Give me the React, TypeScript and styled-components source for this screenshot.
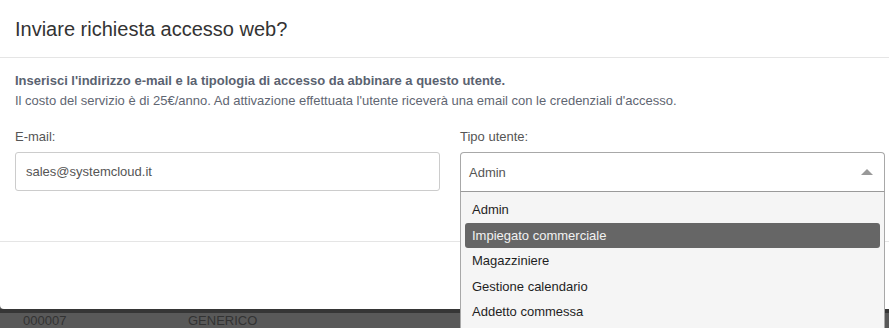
import type { FC } from 'react';
import styled, { createGlobalStyle } from 'styled-components';

const GlobalStyle = createGlobalStyle`
  html, body {
    margin: 0;
    padding: 0;
    background: #595959;
    overflow: hidden;
  }
  body {
    font-family: 'Liberation Sans', Arial, sans-serif;
    font-size: 13px;
    color: #333;
  }
`;

const Page = styled.div`
  width: 889px;
  height: 328px;
  overflow: hidden;
  position: relative;
`;

const Modal = styled.div`
  width: 900px;
  background: #fff;
  border-radius: 0 0 4px 4px;
  position: relative;
  z-index: 2;
`;

const Header = styled.div`
  height: 57px;
  padding: 0 15px;
  display: flex;
  align-items: center;
  border-bottom: 1px solid #e5e5e5;
`;

const Title = styled.h4`
  margin: 0;
  font-size: 20px;
  font-weight: 400;
  color: #333;
  line-height: 1;
`;

const Body = styled.div`
  padding: 13px 15px 49px;
`;

const Intro = styled.p`
  margin: 0 0 17px;
  line-height: 20px;
  color: #5f6672;
`;

const Strong = styled.strong`
  font-weight: 700;
  color: #5a6270;
`;

const Row = styled.div`
  display: grid;
  grid-template-columns: 425px 425px;
  column-gap: 20px;
`;

const Field = styled.div`
  display: flex;
  flex-direction: column;
  position: relative;
`;

const Label = styled.label`
  line-height: 18px;
  margin-bottom: 6px;
  color: #555;
`;

const Input = styled.div`
  height: 39px;
  box-sizing: border-box;
  border: 1px solid #ccc;
  border-radius: 3px;
  padding: 0 10px;
  display: flex;
  align-items: center;
  color: #555;
`;

const Select = styled.div`
  height: 40px;
  box-sizing: border-box;
  border: 1px solid #a8a8a8;
  border-bottom-color: #9a9a9a;
  border-radius: 4px 4px 0 0;
  padding: 0 8px;
  display: flex;
  align-items: center;
  justify-content: space-between;
  color: #555;
`;

const Arrow = styled.span`
  width: 0;
  height: 0;
  border-left: 6px solid transparent;
  border-right: 6px solid transparent;
  border-bottom: 6px solid #999;
  margin-right: 3px;
`;

const Dropdown = styled.ul`
  position: absolute;
  left: 0;
  right: 0;
  top: 64px;
  margin: 0;
  padding: 5px 0 6px;
  list-style: none;
  background: #f5f5f5;
  border: 1px solid #a8a8a8;
  border-top: none;
  box-sizing: border-box;
  z-index: 5;
`;

const Option = styled.li<{ $active?: boolean }>`
  height: 25.5px;
  margin: 0 4px;
  padding: 0 7px;
  display: flex;
  align-items: center;
  border-radius: 3px;
  background: ${({ $active }) => ($active ? '#666' : 'transparent')};
  color: ${({ $active }) => ($active ? '#f2f2f2' : '#1f1f1f')};
`;

const Footer = styled.div`
  height: 67px;
  border-top: 1px solid #e5e5e5;
`;

const Backdrop = styled.div`
  border-top: 4px solid #363636;
  display: flex;
  padding: 0 23px;
  height: 15px;
  align-items: center;
  color: #333;
  line-height: 15px;
  position: relative;
  z-index: 1;
`;

const Cell = styled.span<{ $width: number }>`
  width: ${({ $width }) => $width}px;
`;

const options = [
  'Admin',
  'Impiegato commerciale',
  'Magazziniere',
  'Gestione calendario',
  'Addetto commessa',
];

const App: FC = () => {
  return (
    <Page>
      <GlobalStyle />
      <Modal>
        <Header>
          <Title>Inviare richiesta accesso web?</Title>
        </Header>
        <Body>
          <Intro>
            <Strong>
              Inserisci l'indirizzo e-mail e la tipologia di accesso da abbinare a questo utente.
            </Strong>
            <br />
            Il costo del servizio è di 25€/anno. Ad attivazione effettuata l'utente riceverà una
            email con le credenziali d'accesso.
          </Intro>
          <Row>
            <Field>
              <Label>E-mail:</Label>
              <Input>sales@systemcloud.it</Input>
            </Field>
            <Field>
              <Label>Tipo utente:</Label>
              <Select>
                Admin
                <Arrow />
              </Select>
              <Dropdown>
                {options.map((o) => (
                  <Option key={o} $active={o === 'Impiegato commerciale'}>
                    {o}
                  </Option>
                ))}
              </Dropdown>
            </Field>
          </Row>
        </Body>
        <Footer />
      </Modal>
      <Backdrop>
        <Cell $width={165}>000007</Cell>
        <Cell $width={200}>GENERICO</Cell>
      </Backdrop>
    </Page>
  );
};

export default App;
